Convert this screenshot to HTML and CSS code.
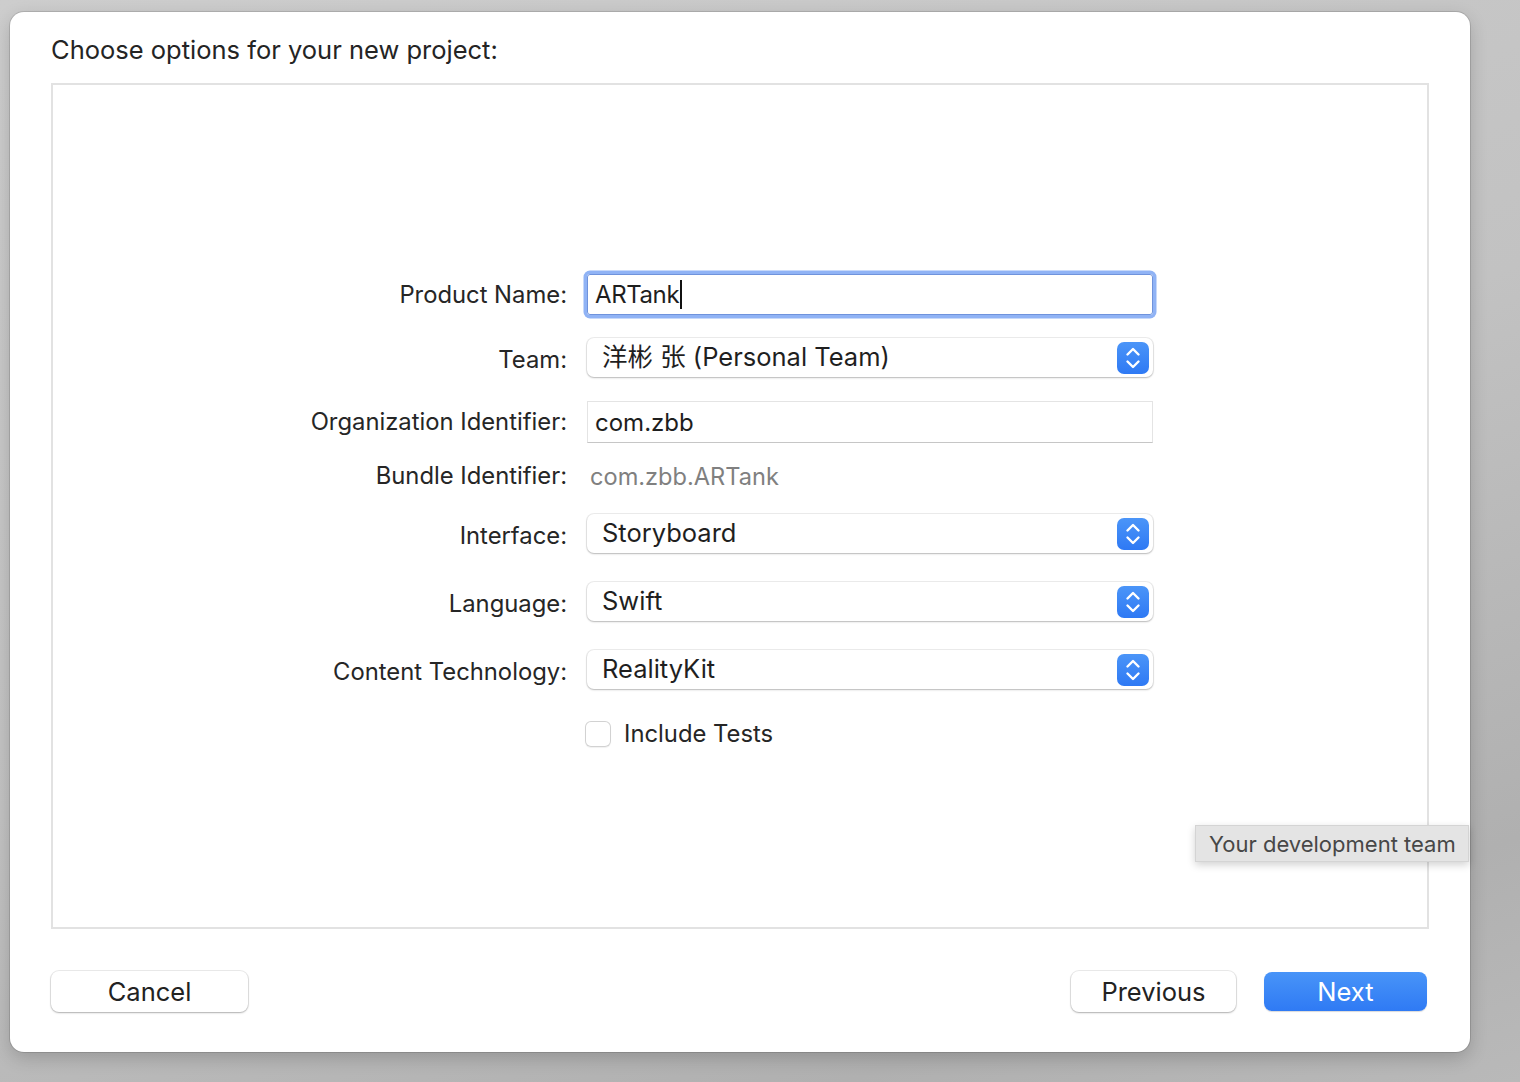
FILE: index.html
```html
<!DOCTYPE html>
<html>
<head>
<meta charset="utf-8">
<link rel="stylesheet" href="styles.css">
</head>
<body>
<div class="desktop">
  <div class="window">
    <h1 class="title">Choose options for your new project:</h1>
    <div class="panel">
      <div class="form">
        <div class="row r1">
          <span class="lbl">Product Name:</span>
          <div class="input focused"><span>ARTank</span><span class="caret"></span></div>
        </div>
        <div class="row r2">
          <span class="lbl">Team:</span>
          <div class="popup"><span class="ptext">洋彬 张 (Personal Team)</span>
            <svg class="stepper" viewBox="0 0 32 32" width="32" height="32"><defs><linearGradient id="g1" x1="0" y1="0" x2="0" y2="1"><stop offset="0" stop-color="#4b95f8"/><stop offset="1" stop-color="#2e79f4"/></linearGradient></defs><rect x="0" y="0" width="32" height="32" rx="7" fill="url(#g1)"/><path d="M10.5 12.5 L16 7 L21.5 12.5 M10.5 19.5 L16 25 L21.5 19.5" fill="none" stroke="#fff" stroke-width="2.4" stroke-linecap="round" stroke-linejoin="round"/></svg>
          </div>
        </div>
        <div class="row r3">
          <span class="lbl">Organization Identifier:</span>
          <div class="input plain"><span>com.zbb</span></div>
        </div>
        <div class="row r4">
          <span class="lbl">Bundle Identifier:</span>
          <div class="static">com.zbb.ARTank</div>
        </div>
        <div class="row r5">
          <span class="lbl">Interface:</span>
          <div class="popup"><span class="ptext">Storyboard</span>
            <svg class="stepper" viewBox="0 0 32 32" width="32" height="32"><rect x="0" y="0" width="32" height="32" rx="7" fill="url(#g1)"/><path d="M10.5 12.5 L16 7 L21.5 12.5 M10.5 19.5 L16 25 L21.5 19.5" fill="none" stroke="#fff" stroke-width="2.4" stroke-linecap="round" stroke-linejoin="round"/></svg>
          </div>
        </div>
        <div class="row r6">
          <span class="lbl">Language:</span>
          <div class="popup"><span class="ptext">Swift</span>
            <svg class="stepper" viewBox="0 0 32 32" width="32" height="32"><rect x="0" y="0" width="32" height="32" rx="7" fill="url(#g1)"/><path d="M10.5 12.5 L16 7 L21.5 12.5 M10.5 19.5 L16 25 L21.5 19.5" fill="none" stroke="#fff" stroke-width="2.4" stroke-linecap="round" stroke-linejoin="round"/></svg>
          </div>
        </div>
        <div class="row r7">
          <span class="lbl">Content Technology:</span>
          <div class="popup"><span class="ptext">RealityKit</span>
            <svg class="stepper" viewBox="0 0 32 32" width="32" height="32"><rect x="0" y="0" width="32" height="32" rx="7" fill="url(#g1)"/><path d="M10.5 12.5 L16 7 L21.5 12.5 M10.5 19.5 L16 25 L21.5 19.5" fill="none" stroke="#fff" stroke-width="2.4" stroke-linecap="round" stroke-linejoin="round"/></svg>
          </div>
        </div>
        <div class="row r8">
          <span class="lbl"></span>
          <div class="check"><span class="box"></span><span class="ctext">Include Tests</span></div>
        </div>
      </div>
    </div>
    <div class="buttons">
      <button class="btn cancel">Cancel</button>
      <div class="spacer"></div>
      <button class="btn prev">Previous</button>
      <button class="btn next">Next</button>
    </div>
    <div class="tooltip">Your development team</div>
  </div>
</div>
</body>
</html>
```

FILE: styles.css
```css
* { box-sizing: border-box; }
html, body { margin: 0; padding: 0; }
body {
  width: 1520px;
  height: 1082px;
  overflow: hidden;
  font-family: "Inter", "Noto Sans CJK SC", sans-serif;
  color: #262626;
}
.desktop {
  width: 1520px;
  height: 1082px;
  padding: 12px 50px 30px 10px;
  background: linear-gradient(160deg, #cdcdcd 0%, #c2c2c2 50%, #b0b0b0 85%, #b9b9b9 100%);
}
.window {
  position: relative;
  width: 1460px;
  height: 1040px;
  background: #fff;
  border-radius: 14px;
  box-shadow: 0 0 0 1px rgba(0,0,0,0.12), 0 6px 18px rgba(0,0,0,0.18);
  padding: 22px 41px 40px 41px;
  display: flex;
  flex-direction: column;
}
.title {
  margin: 0;
  height: 49px;
  font-size: 25.5px;
  font-weight: 400;
  line-height: 31px;
  color: #242424;
}
.panel {
  height: 846px;
  border: 2px solid #e2e2e2;
  padding-top: 189px;
}
.form {
  display: flex;
  flex-direction: column;
}
.row {
  display: grid;
  grid-template-columns: 514px 566px;
  column-gap: 20px;
  align-items: center;
}
.r1 { height: 41px; }
.r2 { height: 39px; margin-top: 23px; }
.r3 { height: 42px; margin-top: 24px; }
.r4 { height: 30px; margin-top: 18px; }
.r5 { height: 39px; margin-top: 23px; }
.r6 { height: 39px; margin-top: 29px; }
.r7 { height: 39px; margin-top: 29px; }
.r8 { height: 26px; margin-top: 30px; }
.lbl {
  text-align: right;
  font-size: 23.8px;
  line-height: 28px;
  padding-top: 0;
  color: #262626;
}
.r2 .lbl, .r5 .lbl, .r6 .lbl, .r7 .lbl { padding-top: 5px; }
.input {
  height: 100%;
  display: flex;
  align-items: center;
  padding-left: 7px;
  font-size: 24px;
  color: #1e1e1e;
}
.input.focused {
  border: 1px solid #6f93dc;
  border-radius: 3px;
  box-shadow: 0 0 0 3.5px #90b3f5;
}
.input.focused span:first-child { letter-spacing: -0.4px; }
.input.plain {
  border: 1px solid #e4e4e4;
  border-bottom-color: #c6c6c6;
}
.caret {
  display: inline-block;
  width: 2px;
  height: 29px;
  background: #111;
  margin-left: 1px;
}
.static {
  padding-left: 3px;
  font-size: 23.6px;
  color: #808080;
}
.popup {
  height: 100%;
  display: flex;
  align-items: center;
  justify-content: space-between;
  padding-left: 15px;
  padding-right: 4px;
  background: #fff;
  border-radius: 7px;
  box-shadow: 0 0 0 1px rgba(0,0,0,0.07), 0 1px 2px rgba(0,0,0,0.22);
}
.ptext {
  font-size: 25.5px;
  line-height: 30px;
  color: #1f1f1f;
  margin-top: -1px;
}
.stepper { display: block; flex: none; }
.check {
  display: flex;
  align-items: center;
  margin-left: -2px;
}
.box {
  width: 26px;
  height: 26px;
  border-radius: 6px;
  background: #fff;
  box-shadow: inset 0 0 0 1px #d2d2d2, 0 1px 1px rgba(0,0,0,0.06);
}
.ctext {
  margin-left: 13px;
  font-size: 23.8px;
  color: #262626;
}
.buttons {
  display: flex;
  align-items: center;
  margin-top: 42px;
  height: 41px;
}
.spacer { flex: 1; }
.btn {
  font-family: "Inter", sans-serif;
  font-size: 25.5px;
  height: 41px;
  border: none;
  border-radius: 8px;
  background: #fff;
  color: #222;
  box-shadow: 0 0 0 1px rgba(0,0,0,0.08), 0 1px 2px rgba(0,0,0,0.25);
  padding: 0;
}
.cancel { width: 197px; }
.prev { width: 165px; }
.next {
  width: 163px;
  height: 39px;
  margin-left: 28px;
  margin-right: 2px;
  color: #fff;
  background: linear-gradient(#4894f8, #2f7af4);
  box-shadow: 0 1px 1px rgba(0,0,0,0.15);
}
.tooltip {
  position: absolute;
  left: 1185px;
  top: 813px;
  width: 274px;
  height: 37px;
  background: #e4e4e4;
  border: 1px solid #d4d4d4;
  box-shadow: 0 3px 8px rgba(0,0,0,0.18);
  font-size: 22px;
  color: #474747;
  display: flex;
  align-items: center;
  padding-left: 13px;
}
```
